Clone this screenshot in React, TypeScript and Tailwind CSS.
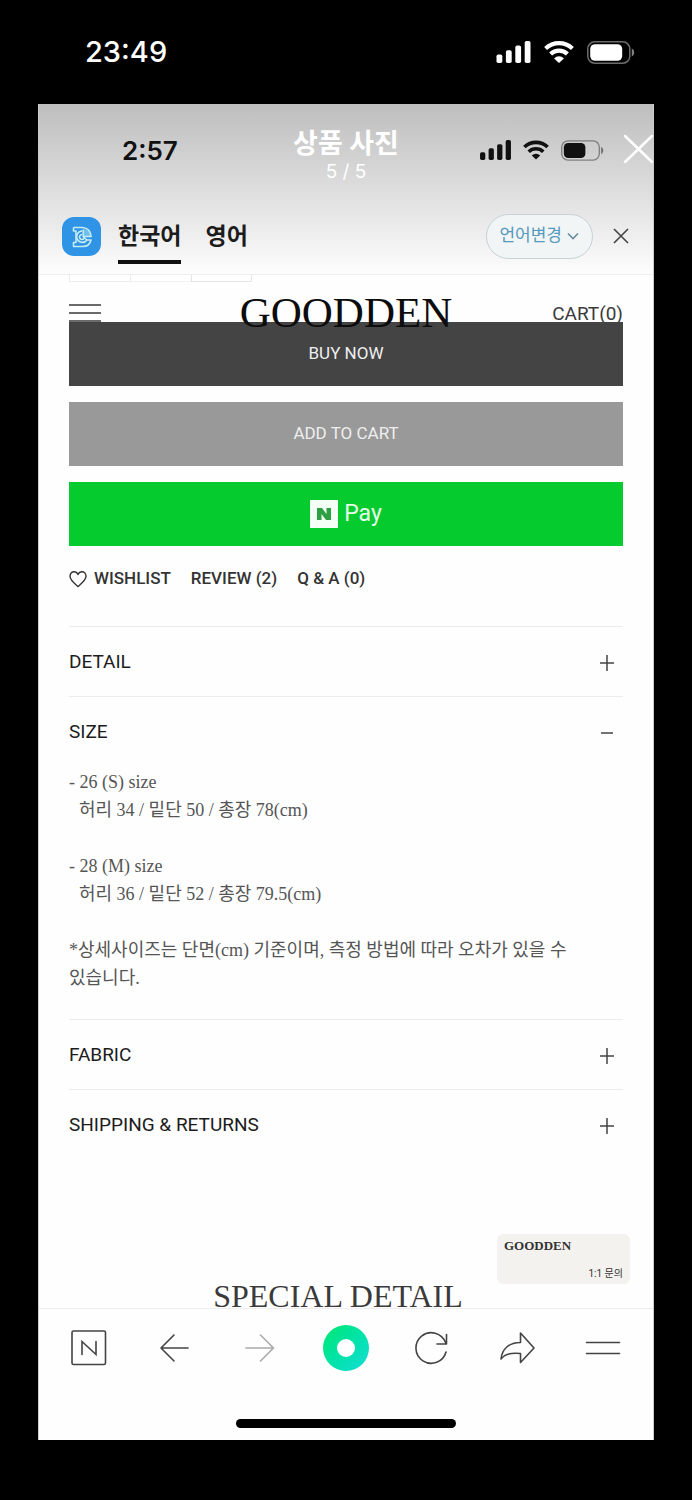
import { useState, type ReactNode } from "react";

const SANS = "font-['Inter','Noto_Sans_CJK_KR',sans-serif]";
const ROBOTO = "font-['Roboto','Noto_Sans_CJK_KR',sans-serif]";
const SERIF = "font-['Liberation_Serif','Noto_Sans_CJK_KR',serif]";

function Signal({ className }: { className: string }) {
  return (
    <svg viewBox="0 0 34 22" className={className} fill="currentColor" aria-hidden="true">
      <rect x="0" y="13.500" width="5.8" height="8.500" rx="1.8" />
      <rect x="9.4" y="9.200" width="5.8" height="12.800" rx="1.8" />
      <rect x="18.8" y="4.600" width="5.8" height="17.400" rx="1.8" />
      <rect x="28.2" y="0" width="5.8" height="22" rx="1.8" />
    </svg>
  );
}

function Wifi({ className }: { className: string }) {
  return (
    <svg viewBox="0 0 30 22" className={className} aria-hidden="true">
      <g fill="none" stroke="currentColor" strokeWidth="4.200">
        <path d="M1.6 7.500A19.400 19.400 0 0 1 28.400 7.500" />
        <path d="M6.600 13A12 12 0 0 1 23.400 13" />
      </g>
      <path d="M15 22l-4.900-4.600a6.800 6.800 0 0 1 9.800 0z" fill="currentColor" />
    </svg>
  );
}

function Battery({ className, level }: { className: string; level: number }) {
  return (
    <svg viewBox="0 0 48 23" className={className} aria-hidden="true">
      <rect x="0.8" y="0.8" width="42" height="21.4" rx="7" fill="none" stroke="currentColor" strokeOpacity="0.42" strokeWidth="1.5" />
      <rect x="3.2" y="3.2" width={level} height="16.6" rx="4.8" fill="currentColor" />
      <path d="M44.8 7.6c3.2 1.2 3.2 6.600 0 7.800z" fill="currentColor" fillOpacity="0.5" />
    </svg>
  );
}

function TranslatorLogo() {
  return (
    <svg viewBox="0 0 39 39" className="h-[39px] w-[39px] shrink-0" role="img" aria-label="번역">
      <rect width="39" height="39" rx="12" fill="#2f93e6" />
      <path d="M21.500 12c4 .5 6.500 3 7 7h-7z" fill="#6fc0ee" />
      <g fill="none" stroke="#c4ecf3" strokeWidth="1.600" strokeLinejoin="round">
        <path d="M11.500 10.500h8.500c5 0 8.800 3.500 9.200 9h-8v-7" />
        <path d="M11.500 10.500v3.500h2.500v11.500h-2.500v4h9c4.500 0 7.700-2.500 8.500-6.500h-4" />
        <path d="M20 14a5.700 5.700 0 1 0 5 9" />
        <path d="M20 17.500a2.500 2.500 0 1 0 2 4M21 19.500l4 3.500" />
      </g>
    </svg>
  );
}

function Sign({ open }: { open: boolean }) {
  return (
    <svg viewBox="0 0 16 16" className="mr-2 h-4 w-4" stroke="#444" strokeWidth="1.5" aria-hidden="true">
      <path d={open ? "M2 8h12" : "M1 8h14M8 0v16"} />
    </svg>
  );
}

function Panel({ title, defaultOpen = false, children }: { title: string; defaultOpen?: boolean; children?: ReactNode }) {
  const [open, setOpen] = useState(defaultOpen);
  return (
    <section className="border-t border-[#ececec]">
      <h2>
        <button
          type="button"
          aria-expanded={open}
          onClick={() => setOpen(!open)}
          className="flex h-[69px] w-full items-center justify-between pt-[2px] text-left text-[19px] text-[#1c1c1c]"
        >
          {title}
          <Sign open={open} />
        </button>
      </h2>
      {open && children}
    </section>
  );
}

function NavButton({ label, faded = false, children }: { label: string; faded?: boolean; children: ReactNode }) {
  return (
    <button
      type="button"
      aria-label={label}
      className={`flex w-[46px] justify-center ${faded ? "text-[#aaaaaa]" : "text-[#444444]"}`}
    >
      <svg viewBox="0 0 40 40" className="h-10 w-10" fill="none" stroke="currentColor" strokeWidth="1.600" strokeLinejoin="round" strokeLinecap="round">
        {children}
      </svg>
    </button>
  );
}

export default function App() {
  return (
    <div className={`min-h-screen bg-black pb-[60px] ${SANS}`}>
      <div className="flex h-[104px] items-center justify-between pl-[85px] pr-[57px] text-white">
        <time className="text-[29px] font-medium">23:49</time>
        <div className="flex items-center gap-[13px]">
          <Signal className="h-[22px] w-[35px]" />
          <Wifi className="h-[22px] w-[30px]" />
          <Battery className="h-[23px] w-12" level={32} />
        </div>
      </div>

      <div className="mx-[38px] border-x border-[#cccccc] bg-[#fefefe]">
        <header className="border-b border-[#eeeeee] bg-linear-to-b from-[#bebebe] to-[#fdfdfd]">
          <div className="grid h-[92px] grid-cols-3">
            <time className="flex items-center pl-[83px] text-[26px] font-semibold text-[#111]">2:57</time>
            <div className="flex flex-col items-center pt-6 text-white">
              <h1 className="text-[27px] leading-8 font-bold whitespace-nowrap">상품 사진</h1>
              <p className="text-[19px] leading-6">5 / 5</p>
            </div>
            <div className="flex items-center justify-between pl-8 text-[#111]">
              <div className="flex items-center gap-3">
                <Signal className="h-5 w-[31px]" />
                <Wifi className="h-5 w-[26px]" />
                <Battery className="h-[21px] w-[43px]" level={24} />
              </div>
              <button type="button" aria-label="닫기" className="text-white">
                <svg viewBox="0 0 30 30" className="h-[30px] w-[30px]" stroke="currentColor" strokeWidth="2.500" strokeLinecap="round">
                  <path d="M2 1l27 26M29 1L2 27" />
                </svg>
              </button>
            </div>
          </div>
          <div className="flex h-[78px] items-center pl-[23px] pr-6 pt-[2px]">
            <TranslatorLogo />
            <nav className="ml-[17px] flex gap-6 text-[23px] font-bold text-[#1c1c1c]">
              <a href="#ko" aria-current="true" className="flex h-14 items-center border-b-4 border-[#111] pt-1">한국어</a>
              <a href="#en" className="flex h-14 items-center border-b-4 border-transparent pt-1">영어</a>
            </nav>
            <button type="button" className="ml-auto flex h-[45px] items-center gap-1 rounded-full border border-[#c6d2d6] bg-[#f1f5f6] px-3 text-[17px] text-[#5599bd]">
              언어변경
              <svg viewBox="0 0 14 14" className="h-[14px] w-[14px]" fill="none" stroke="#6b8fa0" strokeWidth="1.700">
                <path d="M2 4.500l5 5 5-5" />
              </svg>
            </button>
            <button type="button" aria-label="번역 닫기" className="ml-5 text-[#444]">
              <svg viewBox="0 0 16 16" className="h-4 w-4" stroke="currentColor" strokeWidth="1.600">
                <path d="M1 1l14 14M15 1L1 15" />
              </svg>
            </button>
          </div>
        </header>

        <main className={`relative px-[30px] ${ROBOTO}`}>
          <div className="flex h-[7px]" aria-hidden="true">
            <div className="w-[62px] border-x border-b border-[#ececec]" />
            <div className="w-[60px] border-b border-[#f3f3f3]" />
            <div className="w-[61px] border-x border-b border-[#e6e6e6]" />
          </div>

          <div className="grid h-10 grid-cols-[1fr_auto_1fr] items-start text-[#3a3a3a]">
            <button type="button" aria-label="메뉴" className="mt-[22px]">
              <svg viewBox="0 0 32 18" className="h-[18px] w-8" stroke="currentColor" strokeWidth="1.500">
                <path d="M0 1h32M0 9h32M0 17h32" />
              </svg>
            </button>
            <a href="#home" className={`relative z-20 text-[43px] leading-[62px] text-[#0c0c0c] ${SERIF}`}>GOODDEN</a>
            <a href="#cart" className="text-right text-[19px] leading-[64px]">CART(0)</a>
          </div>

          <div className="relative z-10 flex flex-col gap-4 text-[17px] text-[#efefef]">
            <button type="button" className="h-16 bg-[#444444]">BUY NOW</button>
            <button type="button" className="h-16 bg-[#999999]">ADD TO CART</button>
            <button type="button" className="flex h-16 items-center justify-center gap-[6px] bg-[#06cb2e] text-[23px] text-[#e6fbe9]">
              <svg viewBox="0 0 28 28" className="h-7 w-7" role="img" aria-label="N">
                <path d="M0 0h28v28H0z" fill="#f4fff5" />
                <path d="M7 8h5l4.500 6V8H21v12h-5l-4.500-6v6H7z" fill="#2f9f45" />
              </svg>
              Pay
            </button>
          </div>

          <div className="mt-[17px] mb-[31px] flex h-8 items-center gap-5 text-[17px] font-medium text-[#333]">
            <button type="button" className="flex items-center gap-[7px]">
              <svg viewBox="0 0 18 18" className="h-[18px] w-[18px]" fill="none" stroke="#333" strokeWidth="1.400" strokeLinejoin="round">
                <path d="M9 16.500C5 13 1 10 1 6.200 1 3.600 2.800 1.800 5 1.800c1.800 0 3.200 1 4 2.700.8-1.700 2.200-2.700 4-2.700 2.200 0 4 1.800 4 4.400 0 3.800-4 6.800-8 10.300z" />
              </svg>
              WISHLIST
            </button>
            <a href="#review">REVIEW (2)</a>
            <a href="#qna">Q &amp; A (0)</a>
          </div>

          <Panel title="DETAIL" />
          <Panel title="SIZE" defaultOpen>
            <div className={`flex flex-col gap-7 pt-[2px] pb-[27px] text-[18px] leading-7 break-keep text-[#555] ${SERIF}`}>
              <div>
                <p>- 26 (S) size</p>
                <p className="pl-[10px]">허리 34 / 밑단 50 / 총장 78(cm)</p>
              </div>
              <div>
                <p>- 28 (M) size</p>
                <p className="pl-[10px]">허리 36 / 밑단 52 / 총장 79.5(cm)</p>
              </div>
              <p>*상세사이즈는 단면(cm) 기준이며, 측정 방법에 따라 오차가 있을 수 있습니다.</p>
            </div>
          </Panel>
          <Panel title="FABRIC" />
          <Panel title="SHIPPING & RETURNS" />

          <h2 className={`mt-[121px] h-7 pr-4 text-center text-[32px] leading-8 text-[#3a3a3a] ${SERIF}`}>
            SPECIAL DETAIL
          </h2>

          <a href="#chat" className="absolute right-[23px] bottom-6 flex h-[50px] w-[133px] flex-col justify-between rounded-md bg-[#f3f2ee] px-[7px] py-1 text-[#333]">
            <span className={`text-[13px] leading-4 font-bold ${SERIF}`}>GOODDEN</span>
            <span className="self-end text-[10px] leading-3">1:1 문의</span>
          </a>
        </main>

        <footer className="border-t border-[#eeeeee] pb-3">
          <nav className="flex h-[78px] items-center justify-between px-[27px]">
            <NavButton label="네이버 홈">
              <rect x="3" y="3" width="33.500" height="33.500" rx="1.500" />
              <path d="M13 26.500V13.500l14 13V13.500" strokeLinejoin="miter" />
            </NavButton>
            <NavButton label="뒤로">
              <path d="M33 20H6.500M19 7L6 20l13 13" />
            </NavButton>
            <NavButton label="앞으로" faded>
              <path d="M6 20h27M20.500 7l13 13-13 13" />
            </NavButton>
            <button type="button" aria-label="그린닷" className="flex h-[46px] w-[46px] items-center justify-center rounded-full bg-linear-to-br from-[#00e86c] to-[#18dcd8]">
              <span className="h-[18px] w-[18px] rounded-full bg-white" />
            </button>
            <NavButton label="새로고침">
              <path d="M34 24A15.300 15.300 0 1 1 33.500 14.500M34.500 6.500V16H25" />
            </NavButton>
            <NavButton label="공유">
              <path d="M23.500 5L37 20 23.500 34.500V25.500C14 24.500 7.500 26 4 31 5 21 12 14.500 23.500 14.500z" />
            </NavButton>
            <NavButton label="더보기">
              <path d="M3.500 14.500h33M3.500 25.500h33" />
            </NavButton>
          </nav>
          <div className="mx-auto mt-8 h-[9px] w-[220px] rounded-full bg-black" />
        </footer>
      </div>
    </div>
  );
}
